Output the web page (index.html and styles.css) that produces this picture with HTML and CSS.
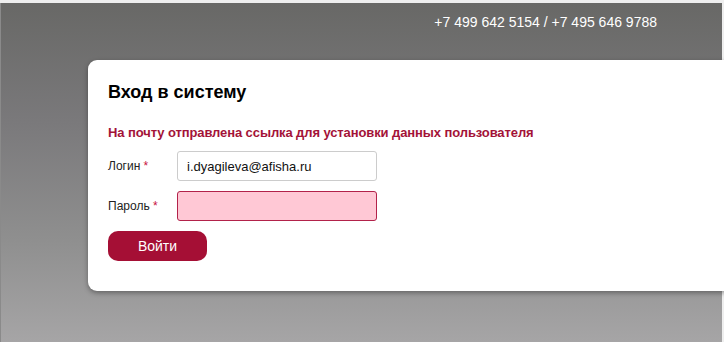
FILE: index.html
```html
<!DOCTYPE html>
<html lang="ru">
<head>
    <meta charset="UTF-8">
    <meta name="viewport" content="width=device-width, initial-scale=1.0">
    <title>Вход в систему</title>
    <link rel="stylesheet" href="styles.css">
</head>
<body>

    <div class="page">
        <div class="header">
            <span class="phones">+7 499 642 5154 / +7 495 646 9788</span>
        </div>

        <div class="card">
            <h1>Вход в систему</h1>
            <p class="notice">На почту отправлена ссылка для установки данных пользователя</p>

            <div class="row">
                <label class="label">Логин <span class="req">*</span></label>
                <input class="field" type="text" value="i.dyagileva@afisha.ru">
            </div>
            <div class="row">
                <label class="label">Пароль <span class="req">*</span></label>
                <input class="field error" type="password">
            </div>

            <button class="btn">Войти</button>
        </div>
    </div>

</body>
</html>
```

FILE: styles.css
```css
html, body {
    margin: 0;
    height: 100%;
    overflow: hidden;
}

body {
    font-family: "Liberation Sans", Arial, sans-serif;
    background: #eeeeee;
    padding-top: 3px;
    box-sizing: border-box;
}

.page {
    height: 100%;
    margin-right: 2px;
    background: linear-gradient(to bottom, #686866 0%, #7a797b 35%, #8f8f8f 70%, #a6a5a6 100%);
    border-left: 1px solid #8a8a8a;
}

.header {
    height: 57px;
    display: flex;
    justify-content: flex-end;
    padding-right: 65px;
}

.phones {
    color: #fff;
    font-size: 14px;
    margin-top: 11px;
}

.card {
    background: #fff;
    margin-left: 87px;
    margin-right: -20px;
    border-radius: 9px;
    padding: 20px 20px 30px 20px;
    box-shadow: 0 2px 5px rgba(0, 0, 0, 0.35);
}

h1 {
    font-size: 18px;
    margin: 0;
    color: #000;
    line-height: 24px;
}

.notice {
    color: #a31338;
    font-size: 13px;
    font-weight: bold;
    letter-spacing: -0.1px;
    margin: 21px 0 11px;
}

.row {
    display: flex;
    align-items: center;
    margin-bottom: 10px;
}

.label {
    width: 69px;
    font-size: 12px;
    color: #222;
}

.req { color: #c8123e; }

.field {
    width: 200px;
    height: 30px;
    box-sizing: border-box;
    border: 1px solid #cccccc;
    border-radius: 3px;
    padding: 0 9px;
    font-family: inherit;
    font-size: 13px;
    color: #111;
}

.field.error {
    background: #ffc8d5;
    border-color: #b2224a;
}

.btn {
    background: #a50f35;
    color: #fff;
    border: none;
    border-radius: 10px;
    width: 99px;
    height: 30px;
    font-family: inherit;
    font-size: 14px;
}
```
